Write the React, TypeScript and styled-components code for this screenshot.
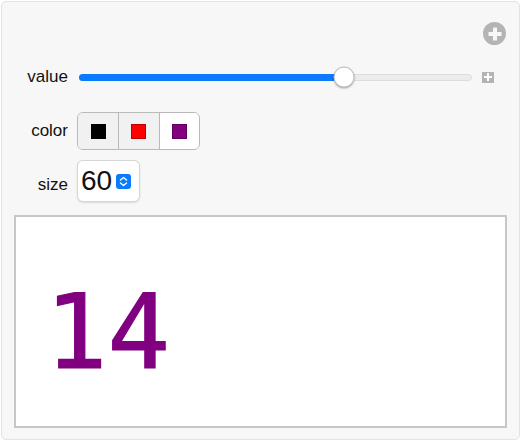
import React, { useState } from "react";
import styled, { createGlobalStyle } from "styled-components";

const Global = createGlobalStyle`
  html, body { margin: 0; padding: 0; background: #ffffff; }
  body { font-family: "Liberation Sans", Arial, sans-serif; }
  * { box-sizing: border-box; }
`;

const Frame = styled.div`
  padding: 1px;
  width: 522px;
  height: 442px;
`;

const Panel = styled.div`
  width: 519px;
  height: 439px;
  background: #f7f7f7;
  border: 1px solid #e3e3e3;
  border-radius: 5px;
  padding: 20px 12px 0 12px;
  display: flex;
  flex-direction: column;
`;

const Header = styled.div`
  display: flex;
  justify-content: flex-end;
  padding-right: 1px;
  height: 23px;
`;

const CircleButton = styled.div`
  width: 23px;
  height: 23px;
  border-radius: 50%;
  background: #b4b4b4;
  position: relative;
  &::before, &::after {
    content: "";
    position: absolute;
    background: #f7f7f7;
    left: 50%;
    top: 50%;
    transform: translate(-50%, -50%);
  }
  &::before { width: 13px; height: 4px; }
  &::after { width: 4px; height: 13px; }
`;

const Controls = styled.div`
  display: grid;
  grid-template-columns: 54px 1fr;
  column-gap: 9px;
  align-items: center;
  margin-top: 20px;
`;

const Label = styled.div<{ $gap?: number }>`
  text-align: right;
  font-size: 17px;
  color: #111;
  margin-top: ${(p) => p.$gap ?? 0}px;
`;

const Cell = styled.div<{ $gap?: number }>`
  display: flex;
  align-items: center;
  margin-top: ${(p) => p.$gap ?? 0}px;
`;

const SliderRow = styled.div`
  display: flex;
  align-items: center;
  height: 24px;
  width: 100%;
  padding-left: 2px;
`;

const Track = styled.div`
  position: relative;
  width: 393px;
  height: 7px;
  border-radius: 4px;
  background: #ececec;
  border: 1px solid #dcdcdc;
`;

const Fill = styled.div`
  position: absolute;
  left: -1px;
  top: -1px;
  bottom: -1px;
  border-radius: 4px;
  background: #0a7aff;
`;

const Thumb = styled.div`
  position: absolute;
  top: 50%;
  width: 21px;
  height: 21px;
  border-radius: 50%;
  background: #ffffff;
  border: 1px solid #bdbdbd;
  box-shadow: 0 1px 2px rgba(0, 0, 0, 0.3);
  transform: translate(-50%, -50%);
`;

const SmallPlus = styled.div`
  margin-left: 10px;
  width: 12px;
  height: 11px;
  background: #b4b4b4;
  position: relative;
  &::before, &::after {
    content: "";
    position: absolute;
    background: #ffffff;
    left: 50%;
    top: 50%;
    transform: translate(-50%, -50%);
  }
  &::before { width: 8px; height: 2px; }
  &::after { width: 2px; height: 8px; }
`;

const Segmented = styled.div`
  display: flex;
  height: 38px;
  border: 1px solid #b9b9b9;
  border-radius: 6px;
  overflow: hidden;
`;

const Segment = styled.button<{ $active: boolean }>`
  width: 40.3px;
  height: 100%;
  border: none;
  border-left: 1px solid #b9b9b9;
  &:first-child { border-left: none; }
  background: ${(p) => (p.$active ? "#ffffff" : "#f1f1f1")};
  display: flex;
  align-items: center;
  justify-content: center;
  padding: 0;
  cursor: pointer;
`;

const Swatch = styled.span<{ $color: string }>`
  width: 15px;
  height: 15px;
  background: ${(p) => p.$color};
  border: 1px solid rgba(0, 0, 0, 0.25);
`;

const Select = styled.div`
  width: 63px;
  height: 42px;
  background: #ffffff;
  border: 1px solid #d6d6d6;
  border-radius: 6px;
  box-shadow: 0 1px 2px rgba(0, 0, 0, 0.12);
  display: flex;
  align-items: center;
  padding-left: 3px;
  gap: 4px;
`;

const SelectValue = styled.span`
  font-size: 28px;
  color: #111;
  line-height: 1;
`;

const Stepper = styled.span`
  width: 15px;
  height: 15px;
  border-radius: 3px;
  background: #0a7aff;
  display: flex;
  align-items: center;
  justify-content: center;
`;

const Output = styled.div`
  margin-top: 13px;
  width: 493px;
  height: 213px;
  background: #ffffff;
  border: 2px solid #c6c6c6;
  padding: 63px 0 0 29px;
`;

const Big = styled.div<{ $color: string }>`
  font-family: "DejaVu Sans Mono", monospace;
  font-size: 104px;
  line-height: 1;
  color: ${(p) => p.$color};
  -webkit-text-stroke: 1.2px ${(p) => p.$color};
`;

const colors = ["#000000", "#ff0000", "#800080"];

export default function App() {
  const [color, setColor] = useState(2);
  const value = 0.675;
  return (
    <Frame>
      <Global />
      <Panel>
        <Header>
          <CircleButton />
        </Header>
        <Controls>
          <Label>value</Label>
          <Cell>
            <SliderRow>
              <Track>
                <Fill style={{ width: `${value * 100}%` }} />
                <Thumb style={{ left: `${value * 100}%` }} />
              </Track>
              <SmallPlus />
            </SliderRow>
          </Cell>
          <Label $gap={23}>color</Label>
          <Cell $gap={23}>
            <Segmented>
              {colors.map((c, i) => (
                <Segment key={c} $active={i === color} onClick={() => setColor(i)}>
                  <Swatch $color={c} />
                </Segment>
              ))}
            </Segmented>
          </Cell>
          <Label $gap={18}>size</Label>
          <Cell $gap={10}>
            <Select>
              <SelectValue>60</SelectValue>
              <Stepper>
                <svg width="9" height="11" viewBox="0 0 9 11" fill="none" stroke="#fff" strokeWidth="1.5" strokeLinecap="round" strokeLinejoin="round">
                  <path d="M1.5 4 L4.5 1.5 L7.5 4" />
                  <path d="M1.5 7 L4.5 9.5 L7.5 7" />
                </svg>
              </Stepper>
            </Select>
          </Cell>
        </Controls>
        <Output>
          <Big $color={colors[color]}>14</Big>
        </Output>
      </Panel>
    </Frame>
  );
}
